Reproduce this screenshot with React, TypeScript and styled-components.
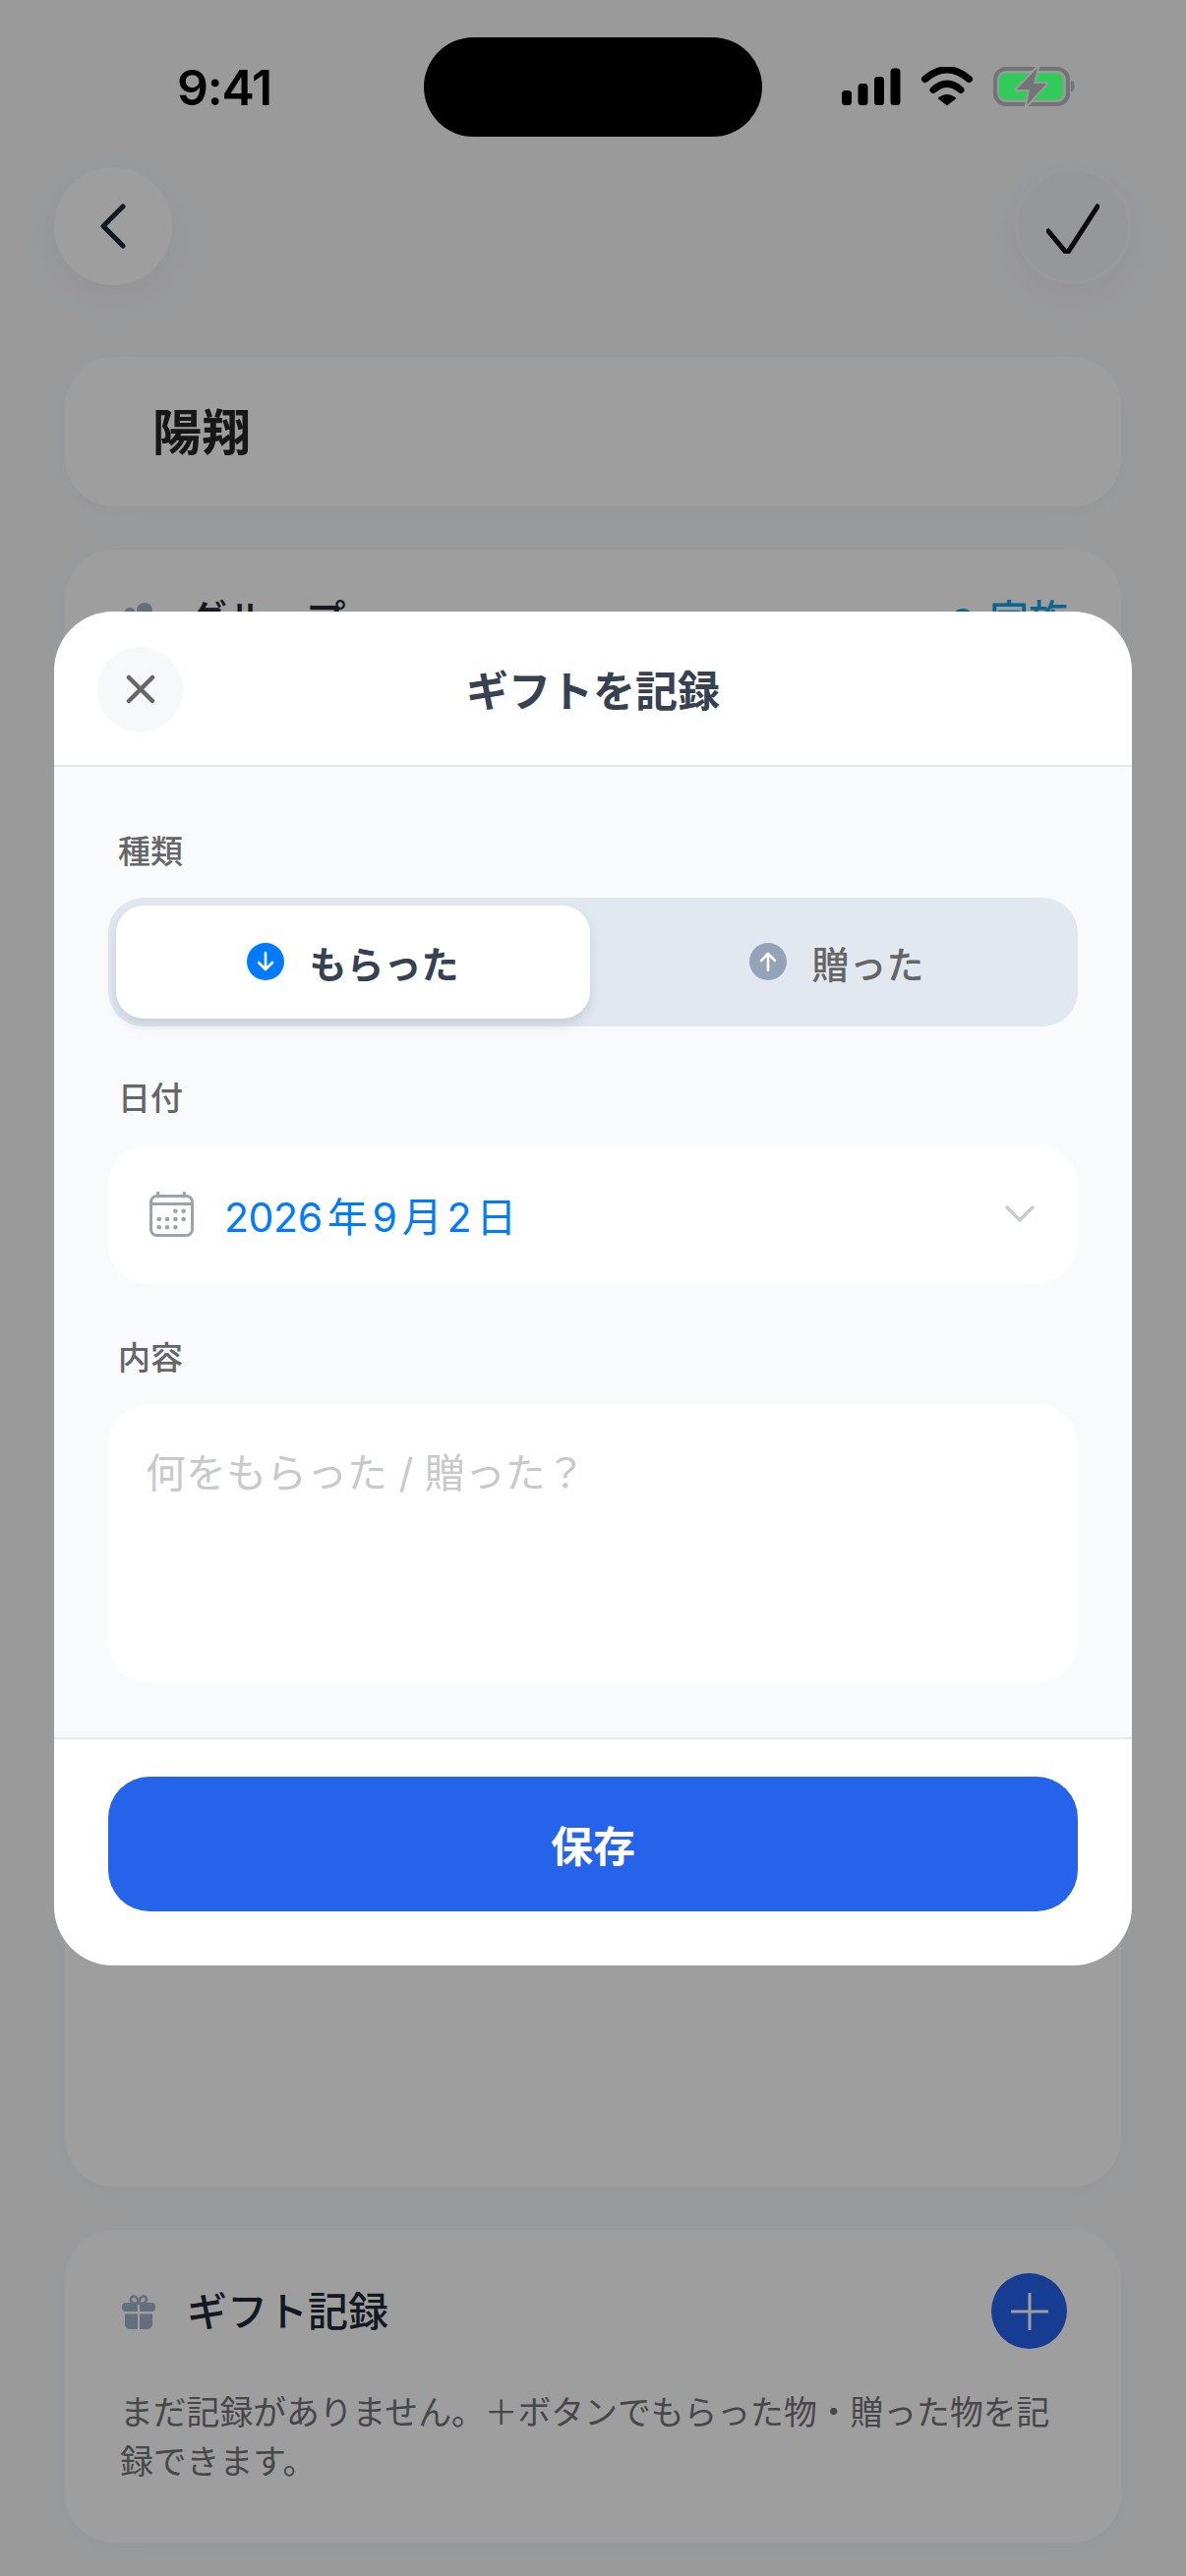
import React from "react";
import styled, { createGlobalStyle } from "styled-components";

const Global = createGlobalStyle`
  html, body { margin: 0; padding: 0; background: #f8f9fb; }
  body { font-family: "Inter", "Noto Sans CJK JP", sans-serif; }
  * { box-sizing: border-box; }
`;

const JP = `"Inter", "Noto Sans CJK JP", sans-serif`;

const Page = styled.div`
  position: relative;
  width: 1206px;
  height: 2620px;
  overflow: hidden;
  background: #f8f9fb;
  font-family: ${JP};
`;

const StatusBar = styled.div`
  position: relative;
  z-index: 3;
  height: 169px;
  padding: 38px 0 0 180px;
  display: flex;
  align-items: flex-start;
`;

const Clock = styled.div`
  width: 251px;
  margin-top: 26px;
  font: 600 50px/50px "Inter", sans-serif;
  letter-spacing: -1.2px;
  color: #000;
`;

const Island = styled.div`
  width: 344px;
  height: 101px;
  border-radius: 51px;
  background: #000;
`;

const StatusIcons = styled.div`
  margin-left: 81px;
  margin-top: 30px;
`;

const Nav = styled.div`
  display: flex;
  justify-content: space-between;
  align-items: center;
  height: 122px;
  padding: 0 56px 0 55px;
`;

const RoundButton = styled.div<{ $size: number; $tinted?: boolean }>`
  width: ${(p) => p.$size}px;
  height: ${(p) => p.$size}px;
  border-radius: 50%;
  display: flex;
  align-items: center;
  justify-content: center;
  background: ${(p) => (p.$tinted ? "#f3f4f6" : "#fff")};
  border: ${(p) => (p.$tinted ? "3px solid #f8f8f9" : "none")};
  box-shadow: 0 12px 40px rgba(0, 0, 0, 0.05);
`;

const Content = styled.div`
  padding: 72px 66px 0;
  display: flex;
  flex-direction: column;
  gap: 44px;
`;

const Card = styled.div<{ $height: number }>`
  height: ${(p) => p.$height}px;
  border-radius: 50px;
  background: #fff;
  box-shadow: 0 6px 30px rgba(0, 0, 0, 0.025);
`;

const NameCard = styled(Card)`
  display: flex;
  align-items: center;
  padding: 0 0 6px 89px;
  font-size: 50px;
  font-weight: 700;
  color: #262626;
`;

const GroupCard = styled(Card)`
  padding: 46px 54px 0 56px;
`;

const Row = styled.div`
  display: flex;
  align-items: center;
  justify-content: space-between;
`;

const RowTitle = styled.div`
  display: flex;
  align-items: center;
  gap: 32px;
  padding-left: 2px;
  font-size: 41px;
  line-height: 50px;
  font-weight: 500;
  color: #1f2937;
`;

const GroupValue = styled.div`
  display: flex;
  align-items: center;
  gap: 16px;
  font-size: 40px;
  line-height: 50px;
  font-weight: 500;
  color: #0ea5e9;
`;

const Dot = styled.span`
  width: 22px;
  height: 22px;
  border-radius: 50%;
  background: #0ea5e9;
`;

const GiftCard = styled(Card)`
  padding: 44px 55px 0 56px;
`;

const AddButton = styled.div`
  width: 77px;
  height: 77px;
  border-radius: 50%;
  background: #2563eb;
  display: flex;
  align-items: center;
  justify-content: center;
`;

const GiftNote = styled.p`
  margin: 40px 0 0 0;
  font-size: 33.8px;
  line-height: 50px;
  color: #737378;
`;

const Scrim = styled.div`
  position: absolute;
  inset: 0;
  z-index: 2;
  padding: 0 55px;
  display: flex;
  align-items: center;
  background: rgba(0, 0, 0, 0.38);
`;

const Sheet = styled.div`
  width: 100%;
  height: 1377px;
  border-radius: 60px;
  overflow: hidden;
  background: #fff;
  display: flex;
  flex-direction: column;
`;

const SheetHeader = styled.div`
  position: relative;
  flex: 0 0 158px;
  border-bottom: 2px solid #e5e7eb;
  display: flex;
  align-items: center;
  justify-content: center;
  font-size: 43px;
  font-weight: 700;
  color: #374151;
`;

const CloseButton = styled.div`
  position: absolute;
  left: 44px;
  top: 36px;
  width: 87px;
  height: 87px;
  border-radius: 50%;
  background: #f7f8fa;
  display: flex;
  align-items: center;
  justify-content: center;
`;

const SheetBody = styled.div`
  flex: 1;
  background: #f9fafc;
  padding: 62px 55px 0;
  display: flex;
  flex-direction: column;
`;

const Label = styled.div<{ $top?: number }>`
  margin-top: ${(p) => p.$top ?? 0}px;
  margin-bottom: 23px;
  padding-left: 10px;
  font-size: 33px;
  line-height: 48px;
  font-weight: 500;
  color: #666;
`;

const Segment = styled.div`
  height: 131px;
  padding: 8px;
  border-radius: 36px;
  background: #e2e8f0;
  display: grid;
  grid-template-columns: 482px 1fr;
`;

const SegmentItem = styled.div<{ $active?: boolean }>`
  display: flex;
  align-items: center;
  justify-content: center;
  gap: 25px;
  padding-left: ${(p) => (p.$active ? 0 : 14)}px;
  border-radius: 28px;
  font-size: 38px;
  font-weight: ${(p) => (p.$active ? 700 : 500)};
  color: ${(p) => (p.$active ? "#374151" : "#666")};
  background: ${(p) => (p.$active ? "#fff" : "transparent")};
  box-shadow: ${(p) => (p.$active ? "0 6px 12px rgba(100, 116, 139, 0.22)" : "none")};
`;

const DateField = styled.div`
  height: 142px;
  border-radius: 42px;
  background: #fff;
  padding: 0 44px 0 42px;
  display: flex;
  align-items: center;
  gap: 30px;
`;

const DateText = styled.div`
  flex: 1;
  font-size: 41px;
  font-weight: 400;
  color: #007aff;
  text-autospace: normal;
  letter-spacing: -0.4px;
`;

const TextArea = styled.div`
  height: 284px;
  border-radius: 42px;
  background: #fff;
  padding: 46px 38px;
  font-size: 41px;
  line-height: 48px;
  color: #c8c9cc;
`;

const SheetFooter = styled.div`
  flex: 0 0 232px;
  border-top: 2px solid #e5e7eb;
  padding: 38px 55px 0;
`;

const SaveButton = styled.div`
  height: 137px;
  border-radius: 42px;
  background: #2563eb;
  color: #fff;
  font-size: 43px;
  font-weight: 700;
  display: flex;
  align-items: center;
  justify-content: center;
`;

const StatusGlyphs = () => (
  <svg width="240" height="40" viewBox="0 0 240 40">
    <rect x="0" y="24" width="10" height="15" rx="3.5" fill="#000" />
    <rect x="16.500" y="17" width="10" height="22" rx="3.5" fill="#000" />
    <rect x="33" y="10" width="10" height="29" rx="3.5" fill="#000" />
    <rect x="49.500" y="1.500" width="10" height="37.500" rx="3.500" fill="#000" />
    <path d="M84.500 12.500 Q107 -7 129.500 12.500" fill="none" stroke="#000" strokeWidth="7" strokeLinecap="round" />
    <path d="M93 23.500 Q107 11 121 23.500" fill="none" stroke="#000" strokeWidth="7" strokeLinecap="round" />
    <path d="M97.500 32 Q107 24 116.500 32 L107 39.500 Z" fill="#000" />
    <rect x="156" y="2" width="74" height="36" rx="11" fill="none" stroke="#727578" strokeWidth="4" />
    <path d="M233 13.500 C238 14 238 25 233 25.500 Z" fill="#727578" />
    <rect x="160" y="6.500" width="65" height="27" rx="7" fill="#30cb58" />
    <path d="M199 1 L178 23 L191 23 L188 39 L208 17 L195 17 Z" fill="#727578" stroke="#9a9b9d" strokeWidth="4" strokeLinejoin="round" paintOrder="stroke" />
  </svg>
);

const ArrowCircle = ({ up, color }: { up?: boolean; color: string }) => (
  <svg width="38" height="38" viewBox="0 0 38 38">
    <circle cx="19" cy="19" r="19" fill={color} />
    <path
      d={up ? "M19 28V11M12 18l7-7 7 7" : "M19 10v17M12 20l7 7 7-7"}
      fill="none"
      stroke="#fff"
      strokeWidth="2.6"
      strokeLinecap="round"
      strokeLinejoin="round"
    />
  </svg>
);

const CalendarIcon = () => (
  <svg width="46" height="46" viewBox="0 0 46 46" style={{ flex: "none" }}>
    <rect x="1.5" y="4.5" width="42" height="40" rx="6" fill="none" stroke="#9aa3b2" strokeWidth="3" />
    <path d="M2 12.500h41M8.700 1v4M35.300 1v4" fill="none" stroke="#9aa3b2" strokeWidth="3" strokeLinecap="round" />
    {[
      [26.3, 19.7],
      [34.7, 19.7],
      [9.7, 28],
      [18, 28],
      [26.3, 28],
      [34.7, 28],
      [9.7, 36.3],
      [18, 36.3],
      [26.3, 36.3],
    ].map(([x, y]) => (
      <circle key={`${x}-${y}`} cx={x} cy={y} r="2.3" fill="#9aa3b2" />
    ))}
  </svg>
);

const GiftIcon = () => (
  <svg width="34" height="36" viewBox="0 0 34 36">
    <path d="M17 9.500C11 10.500 8.500 8 9 5 9.500 1.500 15.500 0.500 17 9.500ZM17 9.500C23 10.500 25.500 8 25 5 24.500 1.500 18.500 0.500 17 9.500Z" fill="none" stroke="#a4b2c8" strokeWidth="2.6" />
    <path d="M4 9h12v9H4a4 4 0 0 1-4-4v-1a4 4 0 0 1 4-4ZM18 9h12a4 4 0 0 1 4 4v1a4 4 0 0 1-4 4H18ZM3 20.500h13V36H8a5 5 0 0 1-5-5ZM18 20.500h13V31a5 5 0 0 1-5 5h-8Z" fill="#a4b2c8" />
  </svg>
);

const PeopleIcon = () => (
  <svg width="34" height="36" viewBox="0 0 34 36">
    <circle cx="23" cy="9" r="8" fill="#a4b2c8" />
    <circle cx="8" cy="12" r="6" fill="#a4b2c8" />
  </svg>
);

export default function App() {
  return (
    <Page>
      <Global />
      <StatusBar>
        <Clock>9:41</Clock>
        <Island />
        <StatusIcons>
          <StatusGlyphs />
        </StatusIcons>
      </StatusBar>
      <Nav>
        <RoundButton $size={120}>
          <svg width="30" height="46" viewBox="0 0 30 46">
            <path d="M25 3 5 23l20 20" fill="none" stroke="#1e293b" strokeWidth="5" strokeLinecap="round" strokeLinejoin="round" />
          </svg>
        </RoundButton>
        <RoundButton $size={118} $tinted>
          <svg width="54" height="56" viewBox="0 0 54 56">
            <path d="M2 33 21 56 52 8" fill="none" stroke="#111" strokeWidth="5" strokeLinecap="round" strokeLinejoin="round" overflow="visible" />
          </svg>
        </RoundButton>
      </Nav>
      <Content>
        <NameCard $height={152}>陽翔</NameCard>
        <GroupCard $height={1665}>
          <Row>
            <RowTitle>
              <PeopleIcon />
              グループ
            </RowTitle>
            <GroupValue>
              <Dot />
              家族
            </GroupValue>
          </Row>
        </GroupCard>
        <GiftCard $height={318}>
          <Row>
            <RowTitle>
              <GiftIcon />
              ギフト記録
            </RowTitle>
            <AddButton>
              <svg width="38" height="38" viewBox="0 0 38 38">
                <path d="M19 1v36M1 19h36" stroke="#fff" strokeWidth="3" strokeLinecap="round" />
              </svg>
            </AddButton>
          </Row>
          <GiftNote>まだ記録がありません。＋ボタンでもらった物・贈った物を記録できます。</GiftNote>
        </GiftCard>
      </Content>
      <Scrim>
        <Sheet>
          <SheetHeader>
            <CloseButton>
              <svg width="30" height="30" viewBox="0 0 30 30">
                <path d="M3 3l24 24M27 3 3 27" fill="none" stroke="#666" strokeWidth="4.500" strokeLinecap="round" />
              </svg>
            </CloseButton>
            ギフトを記録
          </SheetHeader>
          <SheetBody>
            <Label>種類</Label>
            <Segment>
              <SegmentItem $active>
                <ArrowCircle color="#007aff" />
                もらった
              </SegmentItem>
              <SegmentItem>
                <ArrowCircle up color="#94a3b8" />
                贈った
              </SegmentItem>
            </Segment>
            <Label $top={49}>日付</Label>
            <DateField>
              <CalendarIcon />
              <DateText>2026年9月2日</DateText>
              <svg width="30" height="18" viewBox="0 0 30 18">
                <path d="M2 2l13 13L28 2" fill="none" stroke="#c7cad0" strokeWidth="3.500" strokeLinecap="round" strokeLinejoin="round" />
              </svg>
            </DateField>
            <Label $top={51}>内容</Label>
            <TextArea>何をもらった / 贈った？</TextArea>
          </SheetBody>
          <SheetFooter>
            <SaveButton>保存</SaveButton>
          </SheetFooter>
        </Sheet>
      </Scrim>
    </Page>
  );
}
